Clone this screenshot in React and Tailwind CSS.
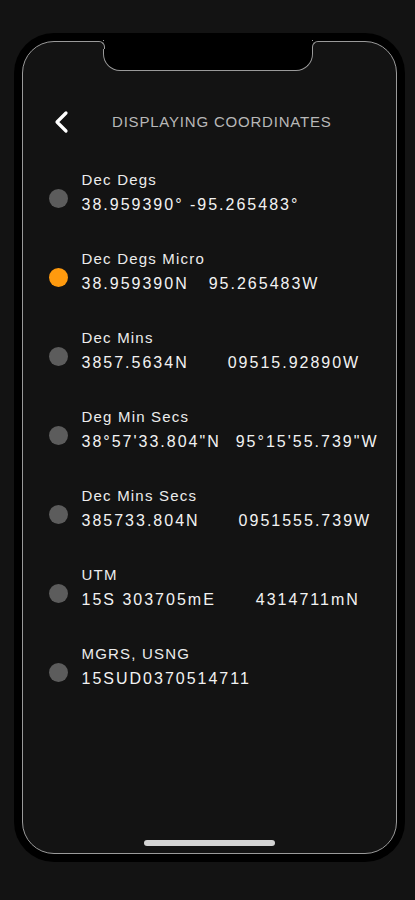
import { useState } from "react";

const FORMATS = [
  { label: "Dec Degs", parts: ["38.959390° -95.265483°"] },
  { label: "Dec Degs Micro", parts: ["38.959390N", "95.265483W"], gap: "ml-[20px]" },
  { label: "Dec Mins", parts: ["3857.5634N", "09515.92890W"], gap: "ml-[39px]" },
  { label: "Deg Min Secs", parts: ["38°57'33.804\"N", "95°15'55.739\"W"], gap: "ml-[15px]" },
  { label: "Dec Mins Secs", parts: ["385733.804N", "0951555.739W"], gap: "ml-[39px]" },
  { label: "UTM", parts: ["15S 303705mE", "4314711mN"], gap: "ml-[40px]" },
  { label: "MGRS, USNG", parts: ["15SUD0370514711"] },
];

export default function App() {
  const [selected, setSelected] = useState(1);

  return (
    <div
      className="w-[415px] h-[900px] bg-[#131313] pt-[33px] pl-[14px]"
      style={{ fontFamily: "'Liberation Sans', Arial, sans-serif" }}
    >
      {/* device frame */}
      <div className="w-[391px] h-[829px] rounded-[40px] bg-black p-[8px]">
        <div className="relative h-full rounded-[32px] border-[1.5px] border-[#9a9a9a] bg-[#131313] flex flex-col">
          {/* notch */}
          <div className="absolute left-[80px] top-[-2px] w-[210px] h-[30.5px] bg-black border-[1.5px] border-t-0 border-[#9a9a9a] rounded-b-[17px]" />
          <div className="absolute left-[74px] top-[-1.5px] w-[7.5px] h-[8px] bg-black">
            <div className="h-full rounded-tr-[6px] border-t-[1.5px] border-r-[1.5px] border-[#9a9a9a] bg-[#131313]" />
          </div>
          <div className="absolute left-[288.5px] top-[-1.5px] w-[7.5px] h-[8px] bg-black">
            <div className="h-full rounded-tl-[6px] border-t-[1.5px] border-l-[1.5px] border-[#9a9a9a] bg-[#131313]" />
          </div>

          <div className="flex items-center mt-[69px] h-[22px] pl-[30px]">
            <button className="w-[16px] h-[24px] flex items-center">
              <svg width="16" height="24" viewBox="0 0 16 24" fill="none">
                <polyline
                  points="13,3 4,12 13,21"
                  stroke="#ffffff"
                  strokeWidth="3.2"
                  strokeLinecap="round"
                  strokeLinejoin="round"
                />
              </svg>
            </button>
            <h1 className="ml-[43px] text-[15px] leading-[22px] tracking-[0.8px] text-[#b8b8b8]">
              DISPLAYING COORDINATES
            </h1>
          </div>

          <ul className="mt-[36px] pl-[25.5px] flex flex-col gap-[32px]">
            {FORMATS.map((f, i) => (
              <li
                key={f.label}
                onClick={() => setSelected(i)}
                className="flex items-start cursor-pointer"
              >
                <span
                  className={
                    "mt-[20px] w-[19px] h-[19px] rounded-full shrink-0 " +
                    (selected === i ? "bg-[#ff9a0e]" : "bg-[#5c5c5c]")
                  }
                />
                <div className="ml-[14px]">
                  <div className="text-[15px] leading-[22px] tracking-[1.2px] text-[#ececec] whitespace-pre">
                    {f.label}
                  </div>
                  <div className="mt-[3px] text-[16px] leading-[22px] tracking-[2px] text-[#f2f2f2] whitespace-pre flex">
                    <span>{f.parts[0]}</span>
                    {f.parts[1] && <span className={f.gap}>{f.parts[1]}</span>}
                  </div>
                </div>
              </li>
            ))}
          </ul>

          <div className="mt-auto mb-[7px] self-center w-[131px] h-[6px] rounded-full bg-[#d4d4d4]" />
        </div>
      </div>
    </div>
  );
}
